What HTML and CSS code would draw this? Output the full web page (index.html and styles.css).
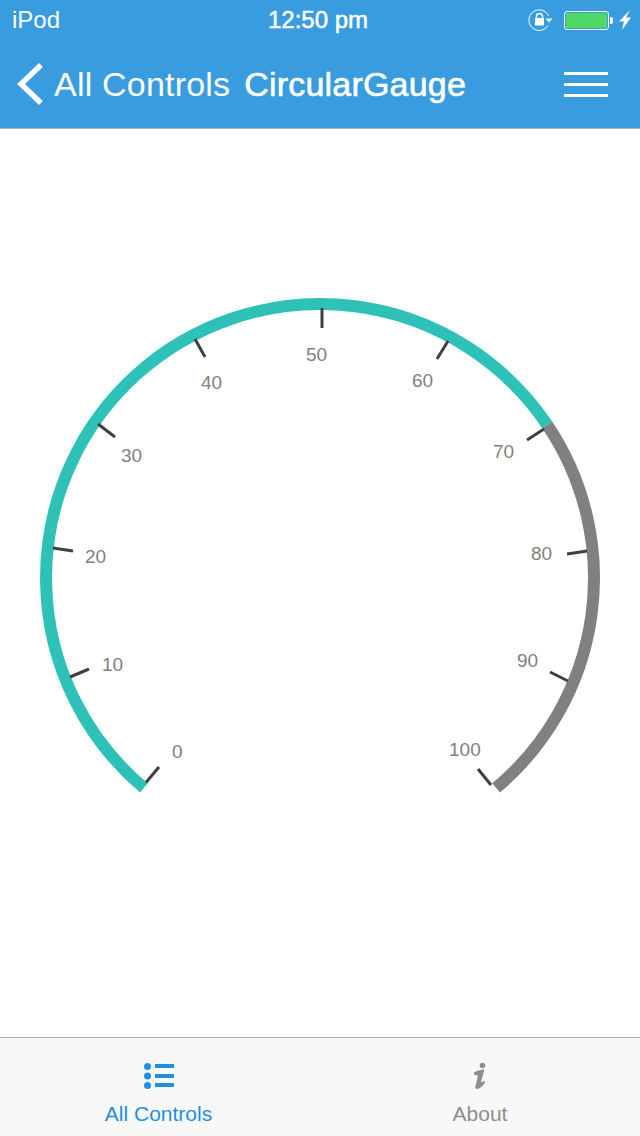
FILE: index.html
```html
<!DOCTYPE html>
<html lang="en">
<head>
    <meta charset="UTF-8">
    <meta name="viewport" content="width=device-width, initial-scale=1.0">
    <title>CircularGauge</title>
    <link rel="stylesheet" href="styles.css">
</head>
<body>
    <header class="header">
        <div class="status-bar">
            <span class="carrier">iPod</span>
            <span class="clock">12:50 pm</span>
            <div class="status-icons">
                <svg class="rotation-lock" width="26" height="24" viewBox="0 0 26 24">
                    <path d="M21 17.500A10.300 10.300 0 1 1 21.600 8" fill="none" stroke="#fff" stroke-width="1"/>
                    <path d="M18.500 10.500h7l-3.500 4z" fill="#fff"/>
                    <path d="M9.500 10V8.500a3 3 0 0 1 6 0V10" fill="none" stroke="#fff" stroke-width="1.500"/>
                    <rect x="8" y="10" width="9" height="7.500" fill="#fff"/>
                </svg>
                <div class="battery">
                    <div class="battery-fill"></div>
                </div>
                <div class="battery-nub"></div>
                <svg class="bolt" width="12" height="20" viewBox="0 0 12 20">
                    <path d="M11 0 0 11.500h5L3 20 12 7.500H7z" fill="#fff"/>
                </svg>
            </div>
        </div>
        <nav class="nav-bar">
            <svg class="back-icon" width="28" height="44" viewBox="0 0 28 44">
                <path d="M25 3 5 22l20 19" fill="none" stroke="#fff" stroke-width="5.500"/>
            </svg>
            <span class="back-label">All Controls</span>
            <span class="page-title">CircularGauge</span>
            <div class="menu-icon">
                <div class="menu-line"></div>
                <div class="menu-line"></div>
                <div class="menu-line"></div>
            </div>
        </nav>
    </header>

    <main class="content">
        <svg class="gauge" width="640" height="908" viewBox="0 129 640 908">
            <!-- range arcs -->
            <path class="arc-filled" d="M143.900 787.900A274 274 0 1 1 547.200 424.800"/>
            <path class="arc-rest" d="M547.200 424.800A274 274 0 0 1 496.100 787.900"/>

            <!-- ticks, 0 to 100 -->
            <line class="tick" x1="146" y1="782.500" x2="159" y2="767"/>
            <line class="tick" x1="70" y1="677" x2="89" y2="669"/>
            <line class="tick" x1="53" y1="548" x2="73" y2="551"/>
            <line class="tick" x1="98" y1="424" x2="115" y2="437"/>
            <line class="tick" x1="195" y1="339" x2="205" y2="357"/>
            <line class="tick" x1="322" y1="308" x2="322" y2="328"/>
            <line class="tick" x1="448" y1="341" x2="437" y2="359"/>
            <line class="tick" x1="544" y1="429" x2="527" y2="440"/>
            <line class="tick" x1="587" y1="551" x2="567" y2="554"/>
            <line class="tick" x1="568" y1="681" x2="550" y2="672"/>
            <line class="tick" x1="491" y1="785" x2="478" y2="769"/>

            <text class="tick-label" x="172" y="758">0</text>
            <text class="tick-label" x="102" y="671">10</text>
            <text class="tick-label" x="85" y="563">20</text>
            <text class="tick-label" x="121" y="462">30</text>
            <text class="tick-label" x="201" y="389">40</text>
            <text class="tick-label" x="306" y="361">50</text>
            <text class="tick-label" x="412" y="387">60</text>
            <text class="tick-label" x="493" y="458">70</text>
            <text class="tick-label" x="531" y="560">80</text>
            <text class="tick-label" x="517" y="667">90</text>
            <text class="tick-label" x="449" y="756">100</text>
        </svg>
    </main>

    <footer class="tab-bar">
        <div class="tab tab-active">
            <svg class="tab-icon" width="32" height="30" viewBox="0 0 32 30">
                <circle cx="3.500" cy="5.500" r="3.500"/>
                <circle cx="3.500" cy="15" r="3.500"/>
                <circle cx="3.500" cy="24.500" r="3.500"/>
                <rect x="11" y="3" width="19" height="4"/>
                <rect x="11" y="13" width="19" height="4"/>
                <rect x="11" y="22" width="19" height="4"/>
            </svg>
            <span class="tab-label tab-label-left">All Controls</span>
        </div>
        <div class="tab">
            <svg class="tab-icon" width="32" height="30" viewBox="0 0 32 30">
                <circle cx="18.500" cy="4.500" r="2.800"/>
                <path d="M10 11.500C13 9.500 17 8.500 20.500 8.500L17 21C18 21 19.500 20.500 20.500 20L21 21.500C19 25 15.500 28 13 28C11.500 28 11 26.500 11.500 25L14 14.500L10.500 14Z"/>
            </svg>
            <span class="tab-label">About</span>
        </div>
    </footer>
</body>
</html>
```

FILE: styles.css
```css
* {
    box-sizing: border-box;
}
body {
    margin: 0;
    width: 640px;
    height: 1136px;
    display: flex;
    flex-direction: column;
    overflow: hidden;
    font-family: "Liberation Sans", Arial, sans-serif;
    background-color: #fff;
}

/* header */
.header {
    height: 129px;
    flex: none;
    background-color: #389cdf;
    border-bottom: 1px solid #b2b2b2;
    color: #fff;
}
.status-bar {
    height: 40px;
    padding: 0 9px 0 12px;
    display: flex;
    align-items: center;
    justify-content: space-between;
    position: relative;
    font-size: 24px;
}
.clock {
    position: absolute;
    left: 268px;
    -webkit-text-stroke: 0.5px #fff;
}
.status-icons {
    display: flex;
    align-items: center;
}
.rotation-lock {
    margin-right: 11px;
}
.battery {
    width: 45px;
    height: 19px;
    padding: 1px;
    border: 1px solid #fff;
    border-radius: 3px;
}
.battery-fill {
    height: 100%;
    background-color: #4cd964;
    border-radius: 1px;
}
.battery-nub {
    width: 3px;
    height: 7px;
    margin-left: 1px;
    background-color: #fff;
    border-radius: 0 2px 2px 0;
}
.bolt {
    margin-left: 6px;
}
.nav-bar {
    height: 88px;
    padding: 0 32px 0 16px;
    display: flex;
    align-items: center;
}
.back-icon {
    margin-right: 10px;
}
.back-label {
    font-size: 34px;
    letter-spacing: 0.2px;
    margin-right: 14px;
}
.page-title {
    font-size: 34px;
    letter-spacing: 0.2px;
    -webkit-text-stroke: 0.6px #fff;
}
.menu-icon {
    margin-left: auto;
    width: 44px;
    display: flex;
    flex-direction: column;
    gap: 8px;
}
.menu-line {
    height: 3px;
    background-color: #fff;
}

/* gauge */
.content {
    flex: 1;
    overflow: hidden;
}
.gauge {
    display: block;
}
.arc-filled, .arc-rest {
    fill: none;
    stroke-width: 12;
}
.arc-filled {
    stroke: #2ec1b8;
}
.arc-rest {
    stroke: #808080;
}
.tick {
    stroke: #404040;
    stroke-width: 3;
}
.tick-label {
    font-size: 19px;
    fill: #808080;
}

/* tabs */
.tab-bar {
    height: 99px;
    flex: none;
    display: flex;
    background-color: #f8f8f8;
    border-top: 1px solid #b2b2b2;
}
.tab {
    flex: 1;
    display: flex;
    flex-direction: column;
    align-items: center;
    padding-top: 23px;
    color: #8e8e8e;
    fill: #8e8e8e;
}
.tab-active {
    color: #1e8fe1;
    fill: #1e8fe1;
}
.tab-icon {
    display: block;
}
.tab-label {
    font-size: 21px;
    margin-top: 11px;
}
.tab-label-left {
    margin-right: 3px;
}
```
